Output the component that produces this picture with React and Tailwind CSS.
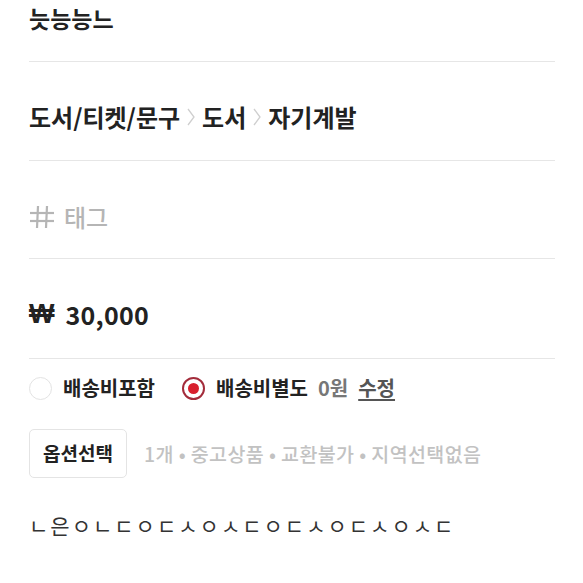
import React from "react";

const font = { fontFamily: '"Noto Sans CJK KR", "Noto Sans", sans-serif' };

function Chevron() {
  return (
    <svg width="10" height="20" viewBox="0 0 10 20" className="mx-[6px] shrink-0">
      <polyline points="2,2 8,10 2,18" fill="none" stroke="#cfcfcf" strokeWidth="1.3" />
    </svg>
  );
}

function Hash() {
  return (
    <svg width="26" height="24" viewBox="0 0 26 24" className="shrink-0">
      <g stroke="#b5b5b5" strokeWidth="2.2" fill="none">
        <line x1="9" y1="1" x2="8" y2="23" />
        <line x1="18" y1="1" x2="17" y2="23" />
        <line x1="1" y1="8" x2="25" y2="8" />
        <line x1="1" y1="16" x2="25" y2="16" />
      </g>
    </svg>
  );
}

export default function App() {
  return (
    <div className="w-[583px] h-[583px] bg-white overflow-hidden text-[#222]" style={font}>
      <div className="ml-[29px] w-[526px]">
        <div className="h-[62px] border-b border-[#e6e6e6] pt-[3px]">
          <div className="text-[23px] leading-[30px] font-bold">늣능능느</div>
        </div>
        <div className="h-[99px] border-b border-[#e6e6e6] pt-[40px]">
          <div className="flex items-center text-[24px] leading-[30px] font-bold">
            <span>도서/티켓/문구</span>
            <Chevron />
            <span>도서</span>
            <Chevron />
            <span>자기계발</span>
          </div>
        </div>
        <div className="h-[98px] border-b border-[#e6e6e6] pt-[41px]">
          <div className="flex items-center h-[30px] gap-[9px]">
            <Hash />
            <span className="text-[24px] leading-[30px] text-[#b5b5b5] font-medium">태그</span>
          </div>
        </div>
        <div className="h-[100px] border-b border-[#e6e6e6] pt-[40px]">
          <div className="flex items-center text-[25px] leading-[30px] font-bold gap-[11px]">
            <span className="text-[27px]" style={{ fontFamily: '"Liberation Sans", sans-serif' }}>₩</span>
            <span className="tracking-[0.3px]">30,000</span>
          </div>
        </div>
        <div className="flex items-center h-[24px] mt-[17px] text-[20px] font-bold leading-[24px]">
          <span className="w-[23px] h-[23px] rounded-full border-[1.5px] border-[#e3e3e3] shrink-0"></span>
          <span className="ml-[11px]">배송비포함</span>
          <span className="ml-[27px] w-[23px] h-[23px] rounded-full border-2 border-[#a32c3b] flex items-center justify-center shrink-0">
            <span className="w-[11px] h-[11px] rounded-full bg-[#d8202e]"></span>
          </span>
          <span className="ml-[11px]">배송비별도</span>
          <span className="ml-[10px] text-[#777]">0원</span>
          <span className="ml-[10px] text-[#555] underline underline-offset-[3px] decoration-[1.5px]">수정</span>
        </div>
        <div className="flex items-center mt-[29px]">
          <div className="w-[98px] h-[49px] border border-[#e4e4e4] rounded-[5px] flex items-center justify-center text-[19px] font-bold">
            옵션선택
          </div>
          <div className="ml-[17px] text-[19.5px] tracking-[0.4px] text-[#c2c2c2] font-medium whitespace-nowrap">
            1개 • 중고상품 • 교환불가 • 지역선택없음
          </div>
        </div>
        <div className="mt-[35px] text-[21px] tracking-[2px] leading-[24px] text-[#333] whitespace-nowrap">
          ㄴ은ㅇㄴㄷㅇㄷㅅㅇㅅㄷㅇㄷㅅㅇㄷㅅㅇㅅㄷ
        </div>
      </div>
    </div>
  );
}
